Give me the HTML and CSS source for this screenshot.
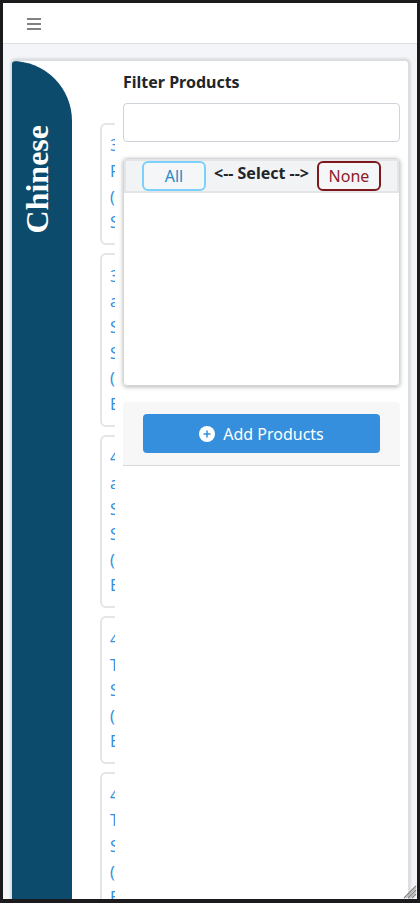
FILE: index.html
```
<!DOCTYPE html>
<html lang="en">
<head>
<meta charset="utf-8">
<title>Products</title>
<link rel="stylesheet" href="styles.css">
</head>
<body>
<div class="app">
  <header class="topbar">
    <svg class="menu" width="14" height="12" viewBox="0 0 14 12"><path d="M0 0h14v2H0zM0 5h14v2H0zM0 10h14v2H0z" fill="#848080"/></svg>
  </header>
  <main class="main">
    <section class="panel">
      <aside class="side"><span class="side-title">Chinese</span></aside>
      <div class="list">
        <div class="item">3<br>P<br>(<br>S</div>
        <div class="item">3<br>a<br>S<br>S<br>(<br>B</div>
        <div class="item">4<br>a<br>S<br>S<br>(<br>B</div>
        <div class="item">4<br>T<br>S<br>(<br>B</div>
        <div class="item">4<br>T<br>S<br>(<br>B</div>
      </div>
      <div class="filter">
        <label class="label" for="q">Filter Products</label>
        <input class="input" id="q" type="text">
        <div class="picker">
          <div class="picker-head">
            <button class="btn all">All</button>
            <span class="select">&lt;-- Select --&gt;</span>
            <button class="btn none">None</button>
          </div>
        </div>
        <div class="actions">
          <button class="add">
            <svg width="16" height="16" viewBox="0 0 16 16"><circle cx="8" cy="8" r="8" fill="#fff"/><path d="M8 4.500v7M4.500 8h7" stroke="#358fdd" stroke-width="1.500"/></svg>
            <span>Add Products</span>
          </button>
        </div>
      </div>
    </section>
  </main>
  <svg class="grip" width="14" height="14" viewBox="0 0 14 14"><path d="M1 13L13 1M5 13L13 5M9 13L13 9" stroke="#858585" stroke-width="1.300"/><path d="M3 13L13 3M7 13L13 7" stroke="#bbb" stroke-width="1"/></svg>
</div>
</body>
</html>
```
FILE: styles.css
```
* { box-sizing: border-box; }
body {
  margin: 0;
  background: #1b1a1c;
  font: 16px/25.6px "Noto Sans", sans-serif;
  color: #212529;
}
.app {
  position: relative;
  height: 903px;
  border: solid #1b1a1c;
  border-width: 3px 3px 4px;
  background: #f3f5f9;
  display: flex;
  flex-direction: column;
  overflow: hidden;
}
.topbar {
  flex: none;
  height: 41px;
  background: #fff;
  border-bottom: 1px solid #dcdfe4;
  padding: 15px 0 0 24px;
}
.menu { display: block; }
.main {
  flex: 1;
  min-height: 0;
  padding: 15px 7px 0 8px;
}
.panel {
  height: 900px;
  display: flex;
  background: #fff;
  border: 1px solid #dcdedf;
  border-width: 2px 2px 0 1px;
  border-radius: 5px;
  box-shadow: 0 0 3px rgba(0, 0, 0, .18);
  overflow: hidden;
}
.side {
  flex: none;
  width: 60px;
  background: #0c4b6c;
  border-radius: 0 60px 0 0;
  padding-top: 63.5px;
}
.side-title {
  display: block;
  writing-mode: vertical-rl;
  transform: rotate(180deg);
  font: bold 32px/50px "Liberation Serif", serif;
  color: #fff;
}
.list {
  flex: none;
  width: 15px;
  margin-left: 28px;
  padding-top: 61.8px;
  overflow: hidden;
}
.item {
  width: 60px;
  margin-bottom: 8px;
  padding: 8.7px 8px 7.3px;
  border: 2px solid #e4e5e9;
  border-radius: 6px;
  color: #358fdd;
}
.filter {
  flex: none;
  width: 277px;
  margin-left: 8px;
  padding-top: 9px;
}
.label {
  display: block;
  font-weight: bold;
  margin-bottom: 7px;
}
.input {
  display: block;
  width: 100%;
  height: 39px;
  border: 1px solid #ced4da;
  border-radius: 4px;
  background: #fff;
}
.picker {
  margin-top: 16px;
  height: 228px;
  border: 1px solid #d5d6d7;
  border-radius: 4px;
  box-shadow: 0 1px 4px rgba(0, 0, 0, .3);
}
.picker-head {
  display: flex;
  justify-content: center;
  height: 34px;
  border: 2px solid #e3e5e8;
  background: #f2f3f5;
}
.btn {
  width: 64px;
  height: 30px;
  padding: 0;
  border: 2px solid;
  border-radius: 6px;
  background: #f5f6f7;
  font: inherit;
  line-height: 26px;
}
.all { color: #238bcb; border-color: #7bd1fb; }
.none { color: #8d2027; border-color: #7d191e; }
.select {
  width: 111px;
  text-align: center;
  font-weight: bold;
  line-height: 24px;
}
.actions {
  margin-top: 16px;
  height: 64px;
  padding: 12px 20px;
  background: #f7f7f7;
  border-bottom: 1px solid #d7d8d9;
  border-radius: 4px 4px 0 0;
}
.add {
  display: flex;
  align-items: center;
  justify-content: center;
  gap: 8px;
  width: 100%;
  height: 39px;
  padding: 1px 0 0;
  border: 0;
  border-radius: 4px;
  background: #358fdd;
  color: #fff;
  font: inherit;
}
.add span { padding-top: 2px; }
.grip {
  position: absolute;
  right: 0;
  bottom: 0;
}
```
